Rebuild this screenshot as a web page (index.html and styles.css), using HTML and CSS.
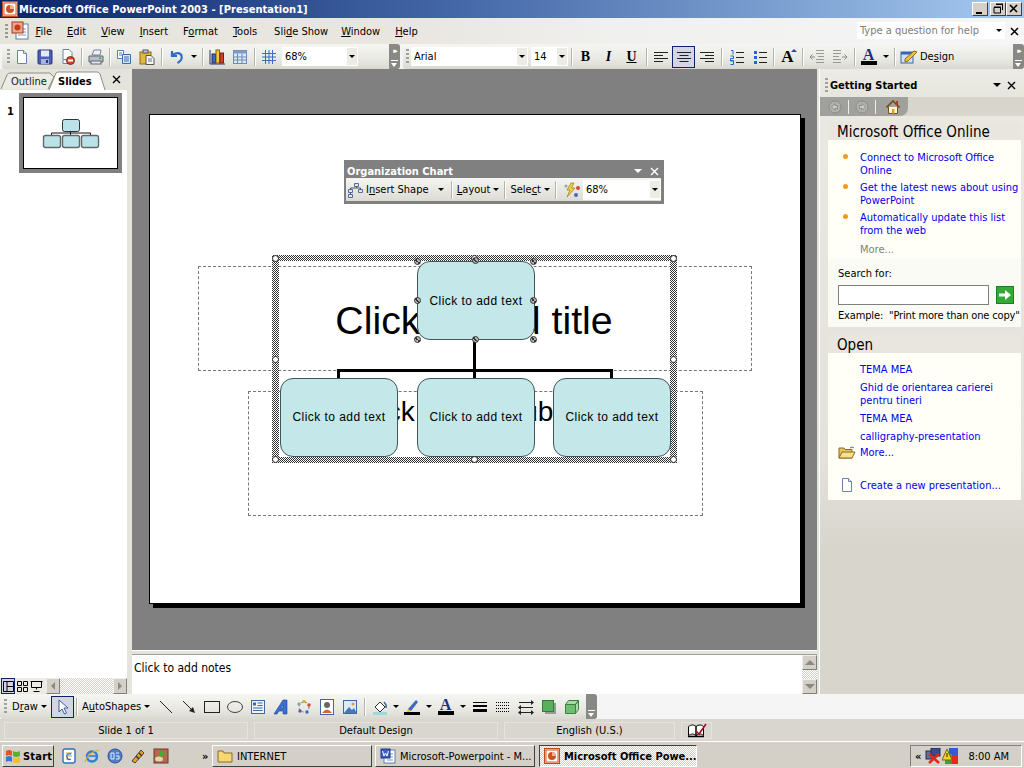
FILE: index.html
```html
<!DOCTYPE html>
<html lang="en">
<head>
<meta charset="utf-8">
<title>Microsoft Office PowerPoint 2003</title>
<link rel="stylesheet" href="styles.css">
</head>
<body>
<div class="app">
  <header class="titlebar">
    <svg class="appicon" viewBox="0 0 16 16"><rect x=".5" y=".5" width="15" height="15" fill="#f6d9c4" stroke="#c34a1b"/><rect x="2" y="2" width="12" height="12" fill="#fff" stroke="#d0582a"/><circle cx="8" cy="8" r="4" fill="#c8541f"/><path d="M8 8V4a4 4 0 0 1 4 4z" fill="#f5b48a"/></svg>
    <span class="titletext">Microsoft Office PowerPoint 2003 - [Presentation1]</span>
    <div class="winbtns">
      <button class="winbtn"><svg viewBox="0 0 14 12"><rect x="3" y="9" width="6" height="2" fill="#000"/></svg></button>
      <button class="winbtn gapb"><svg viewBox="0 0 14 12"><path d="M5 1.500h6.500v5.500M3 4.500h6.500v5.500H3z" fill="none" stroke="#000"/><path d="M5 1h7M3 4h7" stroke="#000"/></svg></button>
      <button class="winbtn"><svg viewBox="0 0 14 12"><path d="M3 2l7 7M10 2l-7 7" stroke="#000" stroke-width="1.600"/></svg></button>
    </div>
  </header>

  <nav class="menubar">
    <svg class="docicon" viewBox="0 0 22 20"><rect x="6" y="3" width="12" height="15" fill="#fff" stroke="#5f7fa8"/><path d="M8 8h8M8 11h8M8 14h8" stroke="#7d93b5"/><rect x="2" y="1" width="11" height="11" fill="#e8a88c" stroke="#a33d1a"/><circle cx="7.500" cy="6.500" r="3" fill="#c23b1b"/></svg>
    <span class="menuitem m1"><u>F</u>ile</span>
    <span class="menuitem"><u>E</u>dit</span>
    <span class="menuitem"><u>V</u>iew</span>
    <span class="menuitem"><u>I</u>nsert</span>
    <span class="menuitem">F<u>o</u>rmat</span>
    <span class="menuitem"><u>T</u>ools</span>
    <span class="menuitem m-slide">Sli<u>d</u>e Show</span>
    <span class="menuitem"><u>W</u>indow</span>
    <span class="menuitem"><u>H</u>elp</span>
    <div class="helpbox">
      <span class="helpfield"><span class="helpinput">Type a question for help</span><span class="arrow helparrow"></span></span>
      <svg class="closex" viewBox="0 0 9 9"><path d="M1 1l7 7M8 1l-7 7" stroke="#000" stroke-width="1.500"/></svg>
    </div>
  </nav>

  <div class="toolrow">
    <div class="tbar tbar1">
      <span class="grip"></span>
      <span class="tb"><svg viewBox="0 0 16 16"><path d="M3.500 1.500h6l3 3v10h-9z" fill="#fff" stroke="#6a84a6"/><path d="M9.500 1.500v3h3" fill="#dfe8f2" stroke="#6a84a6"/></svg></span>
      <span class="tb"><svg viewBox="0 0 16 16"><rect x="1" y="1" width="14" height="14" rx="1" fill="#4b5fb6" stroke="#2a3580"/><rect x="4" y="1.500" width="8" height="6" fill="#e6ebf7"/><rect x="4" y="10" width="8" height="5" fill="#a6b2de"/><rect x="9" y="11" width="2" height="3" fill="#2a3580"/></svg></span>
      <span class="tb"><svg viewBox="0 0 16 16"><path d="M3 .5h6l3 3v7h-9z" fill="#fff" stroke="#6a84a6"/><path d="M3 10.500v4h5" fill="#fff" stroke="#6a84a6"/><circle cx="10.500" cy="11.500" r="4" fill="#d8402a" stroke="#8c2417"/><rect x="8" y="10.500" width="5" height="2" fill="#fff"/></svg></span>
      <span class="sep"></span>
      <span class="tb"><svg viewBox="0 0 16 16"><path d="M4 6L6 1h7l-1 5z" fill="#eef1f6" stroke="#7b8391"/><path d="M1 7h14v6H1z" fill="#b9bfc9" stroke="#5f6672"/><rect x="3" y="12" width="10" height="3" fill="#e5e8ed" stroke="#5f6672"/><rect x="11" y="8.500" width="2" height="1.500" fill="#2ab52a"/></svg></span>
      <span class="sep"></span>
      <span class="tb"><svg viewBox="0 0 16 16"><path d="M1.500 1.500h6v8h-6z" fill="#fff" stroke="#5a7db0"/><path d="M6.500 5.500h8v9h-8z" fill="#dde8f6" stroke="#3e68a8"/><path d="M8 8h5M8 10h5M8 12h5" stroke="#3e68a8"/><path d="M3 4h3M3 6h3" stroke="#5a7db0"/></svg></span>
      <span class="tb"><svg viewBox="0 0 16 16"><rect x="1" y="3" width="11" height="12" fill="#e4b743" stroke="#8f6b10"/><rect x="4" y="1" width="5" height="3" fill="#c8c8c8" stroke="#555"/><path d="M7 6.500h5l3 3v6H7z" fill="#f5f5f5" stroke="#555"/><path d="M9 10h4M9 12h4" stroke="#777"/></svg></span>
      <span class="sep s7"></span>
      <span class="tb"><svg viewBox="0 0 16 16"><path d="M3 2v5h5M3.500 6.500C6 3.500 11 3 12.500 6.500c1 3-1 6-4 7.500" fill="none" stroke="#2f6bc4" stroke-width="2.200"/></svg></span>
      <span class="tba"><span class="arrow"></span></span>
      <span class="sep s6"></span>
      <span class="tb"><svg viewBox="0 0 16 16"><path d="M1 1v14h15" fill="none" stroke="#2b2b70"/><rect x="3" y="5" width="3.500" height="9" fill="#3c67c8" stroke="#1c2f70"/><rect x="7" y="1" width="3.500" height="13" fill="#f1cc2e" stroke="#7c6510"/><rect x="11" y="4" width="3.500" height="10" fill="#d83d2b" stroke="#7c1e12"/></svg></span>
      <span class="tb"><svg viewBox="0 0 16 16"><rect x="1.500" y="1.500" width="13" height="13" fill="#dfe8f7" stroke="#6b8bb8"/><rect x="1.500" y="1.500" width="13" height="3" fill="#7e9cc8"/><path d="M5.500 4.500v10M10 4.500v10M1.500 8h13M1.500 11h13" stroke="#6b8bb8"/></svg></span>
      <span class="sep s6"></span>
      <span class="tb"><svg viewBox="0 0 16 16"><path d="M4.500 1v14M8 1v14M11.500 1v14M1 4.500h14M1 8h14M1 11.500h14" stroke="#3d6bc8"/></svg></span>
      <span class="combo zoomcombo"><span class="comboval">68%</span><span class="comboarrow"><span class="arrow"></span></span></span>
      <span class="overflow"><span class="chev">▸▸</span><span class="ofl"></span></span>
    </div>
    <div class="tbar tbar2">
      <span class="grip"></span>
      <span class="combo fontcombo"><span class="comboval">Arial</span><span class="comboarrow"><span class="arrow"></span></span></span>
      <span class="combo sizecombo"><span class="comboval">14</span><span class="comboarrow"><span class="arrow"></span></span></span>
      <span class="sep s6"></span>
      <span class="tb fmt fb">B</span>
      <span class="tb fmt fi">I</span>
      <span class="tb fmt fu">U</span>
      <span class="sep s6"></span>
      <span class="tb"><svg viewBox="0 0 16 16"><path d="M1 3.500h14M1 6.500h9M1 9.500h14M1 12.500h9" stroke="#222"/></svg></span>
      <span class="tb active"><svg viewBox="0 0 16 16"><path d="M1 3.500h14M3.500 6.500h9M1 9.500h14M3.500 12.500h9" stroke="#222"/></svg></span>
      <span class="tb"><svg viewBox="0 0 16 16"><path d="M1 3.500h14M6 6.500h9M1 9.500h14M6 12.500h9" stroke="#222"/></svg></span>
      <span class="sep s7"></span>
      <span class="tb"><svg viewBox="0 0 16 16"><path d="M7 3.500h8M7 8.500h8M7 13.500h8" stroke="#222"/><path d="M2 1.500h2v4M1.500 7h3v2.500h-3V12h3M1.500 11.500h3v4h-3" fill="none" stroke="#2d5fd0"/></svg></span>
      <span class="tb"><svg viewBox="0 0 16 16"><path d="M7 3.500h8M7 8.500h8M7 13.500h8" stroke="#222"/><path d="M2 2h3v3H2zM2 7h3v3H2zM2 12h3v3H2z" fill="#2d5fd0"/></svg></span>
      <span class="sep"></span>
      <span class="tb fontup">A<i class="upc"></i></span>
      <span class="sep s6"></span>
      <span class="tb"><svg viewBox="0 0 16 16"><path d="M7 1.500h8M7 4.500h8M9 7.500h6M7 10.500h8M7 13.500h8" stroke="#9a9a94"/><path d="M6 8H1M3.500 5.500L1 8l2.500 2.500" fill="none" stroke="#8a8a84"/></svg></span>
      <span class="tb"><svg viewBox="0 0 16 16"><path d="M1 1.500h8M1 4.500h8M1 7.500h6M1 10.500h8M1 13.500h8" stroke="#9a9a94"/><path d="M10 8h5M12.500 5.500L15 8l-2.500 2.500" fill="none" stroke="#8a8a84"/></svg></span>
      <span class="sep s6"></span>
      <span class="tb fcolor">A<i class="cbar"></i></span>
      <span class="tba"><span class="arrow"></span></span>
      <span class="sep s6"></span>
      <span class="designbtn"><svg class="dsic" viewBox="0 0 18 16"><rect x="1" y="3" width="12" height="11" fill="#cfdff5" stroke="#3a64b0"/><rect x="1" y="3" width="12" height="2.500" fill="#3a64b0"/><path d="M5 10l9-8 3 1-9 9-3 1z" fill="#f0c23c" stroke="#8b6a10"/></svg>De<u>s</u>ign</span>
      <span class="overflow endov"><span class="chev">▸▸</span><span class="ofl"></span></span>
    </div>
  </div>

  <main class="workspace">
    <aside class="leftpane">
      <div class="tabs">
        <svg class="tabshape" viewBox="0 0 127 21"><path d="M1 20L7 6Q8 4 10 4H50L54 8L48 20" fill="#ecebe4" stroke="#8d8d85"/><path d="M49 21L56 4Q57 3 59 3H97Q99 3 100 5L105 21z" fill="#fff"/><path d="M49 21L56 4Q57 3 59 3H97Q99 3 100 5L105 21" fill="none" stroke="#8d8d85"/></svg>
        <span class="tab outline">Outline</span>
        <span class="tab slides">Slides</span>
        <svg class="tabclose" viewBox="0 0 9 9"><path d="M1 1l7 7M8 1l-7 7" stroke="#000" stroke-width="1.400"/></svg>
      </div>
      <div class="thumbs">
        <span class="thumbnum">1</span>
        <div class="thumb">
          <svg class="thumbchart" viewBox="0 0 95 72"><path d="M47.500 34v4M28.500 38v-2h39v2" fill="none" stroke="#111"/><rect x="39.500" y="22.500" width="17" height="12" rx="2" fill="#b9e3e8" stroke="#333"/><rect x="20.500" y="38.500" width="17" height="12" rx="2" fill="#b9e3e8" stroke="#666" stroke-width="1.400"/><rect x="39.500" y="38.500" width="17" height="12" rx="2" fill="#b9e3e8" stroke="#666" stroke-width="1.400"/><rect x="58.500" y="38.500" width="17" height="12" rx="2" fill="#b9e3e8" stroke="#666" stroke-width="1.400"/></svg>
        </div>
      </div>
      <div class="viewbar">
        <span class="vbtn vactive"><svg viewBox="0 0 13 13"><path d="M1.500 1.500h10v10h-10zM5 1.500v10M5 6.500h6.500" fill="none" stroke="#000"/></svg></span>
        <span class="vbtn"><svg viewBox="0 0 13 13"><path d="M1.500 1.500h4v4h-4zM7.500 1.500h4v4h-4zM1.500 7.500h4v4h-4zM7.500 7.500h4v4h-4z" fill="none" stroke="#000"/></svg></span>
        <span class="vbtn"><svg viewBox="0 0 13 13"><path d="M1.500 1.500h10v6h-10zM6.500 7.500v2M3.500 11.500h6M0.500 1.500h12" fill="none" stroke="#000"/></svg></span>
        <span class="hscroll">
          <span class="sbtn"><i class="ar-l"></i></span>
          <span class="sbtrack"></span>
          <span class="sbtn"><i class="ar-r"></i></span>
        </span>
      </div>
    </aside>

    <section class="centerpane">
      <div class="stage">
        <div class="slide">
          <div class="ph ph-title"><span>Click to add title</span></div>
          <div class="ph ph-sub"><span>Click to add subtitle</span></div>
          <div class="chartframe">
            <i class="edge e-t"></i><i class="edge e-b"></i><i class="edge e-l"></i><i class="edge e-r"></i>
            <i class="hd hd-tl"></i><i class="hd hd-tc"></i><i class="hd hd-tr"></i>
            <i class="hd hd-ml"></i><i class="hd hd-mr"></i>
            <i class="hd hd-bl"></i><i class="hd hd-bc"></i><i class="hd hd-br"></i>
          </div>
          <i class="conn conn-v1"></i><i class="conn conn-h"></i><i class="conn conn-d1"></i><i class="conn conn-d2"></i><i class="conn conn-d3"></i>
          <div class="node n-top">Click to add text</div>
          <div class="node n-a">Click to add text</div>
          <div class="node n-b">Click to add text</div>
          <div class="node n-c">Click to add text</div>
          <i class="sh sh1"></i><i class="sh sh2"></i><i class="sh sh3"></i><i class="sh sh4"></i><i class="sh sh5"></i><i class="sh sh6"></i><i class="sh sh7"></i><i class="sh sh8"></i>
        </div>
        <div class="orgbar">
          <div class="orgtitle"><span>Organization Chart</span><span class="tri"></span><svg class="orgx" viewBox="0 0 9 9"><path d="M1 1l7 7M8 1l-7 7" stroke="#fff" stroke-width="1.400"/></svg></div>
          <div class="orgbody">
            <span class="orgitem oi1"><svg class="orgic" viewBox="0 0 16 16"><path d="M7.500 1.500h4v3h-4zM1.500 7.500h4v3h-4zM11.500 7.500h4v3h-4zM1.500 12.500h4v3h-4z" fill="#dfe8f5" stroke="#4f6f9f"/><path d="M9.500 4.500v1.500h-6v1.500M9.500 6h4v1.500M3.500 10.500v2" fill="none" stroke="#555"/></svg>I<u>n</u>sert Shape<span class="arrow a1"></span></span>
            <span class="sep osep"></span>
            <span class="orgitem"><u>L</u>ayout<span class="arrow a2"></span></span>
            <span class="sep osep"></span>
            <span class="orgitem">Sele<u>c</u>t<span class="arrow a2"></span></span>
            <span class="sep osep"></span>
            <svg class="orgic2" viewBox="0 0 18 16"><path d="M8 1L4 8h3L4 15l8-9H8.500L11 1z" fill="#f0cf40" stroke="#9a7a20" stroke-width=".7"/><circle cx="15" cy="6" r="2" fill="#cf4a38"/><circle cx="13" cy="13" r="2" fill="#3d6bc8"/><circle cx="3" cy="4" r="1.500" fill="#8aa"/></svg>
            <span class="combo orgcombo"><span class="comboval">68%</span><span class="comboarrow"><span class="arrow"></span></span></span>
          </div>
        </div>
      </div>
      <div class="splitter"></div>
      <div class="notes">
        <span class="notestext">Click to add notes</span>
        <span class="vscroll">
          <span class="sbtn vs"><i class="ar-u"></i></span>
          <span class="sbtrack"></span>
          <span class="sbtn vs"><i class="ar-d"></i></span>
        </span>
      </div>
    </section>

    <aside class="taskpane">
      <div class="tphead">
        <span class="grip tpgrip"></span>
        <span class="tptitle">Getting Started</span>
        <span class="tri dark"></span>
        <svg class="tpclose" viewBox="0 0 9 9"><path d="M1 1l7 7M8 1l-7 7" stroke="#000" stroke-width="1.400"/></svg>
      </div>
      <div class="tpnav">
        <svg class="navic" viewBox="0 0 14 14"><circle cx="7" cy="7" r="6" fill="#b0b0ac" stroke="#8b8b87"/><path d="M9.500 5.500H7V3.500L3.500 7 7 10.500V8.500h2.500z" fill="#c8c8c4" stroke="#858581" stroke-width=".8"/></svg>
        <i class="navsep"></i>
        <svg class="navic" viewBox="0 0 14 14"><circle cx="7" cy="7" r="6" fill="#b0b0ac" stroke="#8b8b87"/><path d="M4.500 5.500H7V3.500L10.500 7 7 10.500V8.500H4.500z" fill="#c8c8c4" stroke="#858581" stroke-width=".8"/></svg>
        <i class="navsep"></i>
        <svg class="navic home" viewBox="0 0 14 14"><path d="M2.500 7v6.500h9V7" fill="#fff7d8" stroke="#6b5520"/><path d="M.5 7.500L7 1l6.500 6.500" fill="none" stroke="#7a4a1c" stroke-width="1.600"/><rect x="10" y="1" width="2" height="3.500" fill="#b8352a"/><rect x="6" y="9" width="2.500" height="4.500" fill="#e6a020"/></svg>
      </div>
      <div class="tpbody">
        <section class="tpsec">
          <h2 class="sechead">Microsoft Office Online</h2>
          <ul class="links">
            <li>Connect to Microsoft Office Online</li>
            <li>Get the latest news about using PowerPoint</li>
            <li>Automatically update this list from the web</li>
          </ul>
          <p class="moregray">More...</p>
          <div class="searchbox">
            <label class="slabel">Search for:</label>
            <div class="srow"><span class="sinput"></span><svg class="gobtn" viewBox="0 0 18 18"><rect x=".5" y=".5" width="17" height="17" fill="#35a835" stroke="#1f7f1f"/><path d="M3 7.500h6V4l6 5-6 5v-3.500H3z" fill="#fff"/></svg></div>
            <p class="sexample">Example: &nbsp;"Print more than one copy"</p>
          </div>
        </section>
        <section class="tpsec sec2">
          <h2 class="sechead">Open</h2>
          <div class="openlist">
            <p class="ol">TEMA MEA</p>
            <p class="ol">Ghid de orientarea carierei pentru tineri</p>
            <p class="ol">TEMA MEA</p>
            <p class="ol tight">calligraphy-presentation</p>
            <p class="ol ic-row"><svg class="rowic" viewBox="0 0 18 14"><path d="M1 13V3h5l1 1.500h7V13z" fill="#e7c468" stroke="#8a6a20"/><path d="M1 13l3-6h13l-3 6z" fill="#f6e08f" stroke="#8a6a20"/><path d="M12 3q2-2 4 0" fill="none" stroke="#4f6fa8"/></svg>More...</p>
            <p class="ol ic-row create"><svg class="rowic doc" viewBox="0 0 14 16"><path d="M2.500 1.500h6l3 3v10h-9z" fill="#fff" stroke="#6a84a6"/><path d="M8.500 1.500v3h3" fill="#dfe8f2" stroke="#6a84a6"/></svg>Create a new presentation...</p>
          </div>
        </section>
      </div>
    </aside>
  </main>

  <div class="drawbar">
    <div class="tbar tbar3">
      <span class="grip"></span>
      <span class="drawmenu dm1">D<u>r</u>aw<span class="arrow"></span></span>
      <span class="tb active ptr"><svg viewBox="0 0 16 16"><path d="M4 1v12l3-3 2.500 5 2-1L9 9h4z" fill="#fff" stroke="#3a5a9a"/></svg></span>
      <span class="sep"></span>
      <span class="drawmenu auto">A<u>u</u>toShapes<span class="arrow"></span></span>
      <span class="tb"><svg viewBox="0 0 16 16"><path d="M2 2l12 12" stroke="#222"/></svg></span>
      <span class="tb"><svg viewBox="0 0 16 16"><path d="M2 2l10 10" stroke="#222"/><path d="M14 14L8 12l4-4z" fill="#222"/></svg></span>
      <span class="tb"><svg viewBox="0 0 16 16"><rect x=".5" y="2.500" width="15" height="11" fill="none" stroke="#222"/></svg></span>
      <span class="tb"><svg viewBox="0 0 16 16"><ellipse cx="8" cy="8" rx="7.500" ry="5.500" fill="none" stroke="#444"/></svg></span>
      <span class="tb"><svg viewBox="0 0 16 16"><rect x="1.500" y="1.500" width="13" height="13" fill="#eef3fa" stroke="#3f68a8"/><path d="M3 3.500h3v3H3z" fill="#3f68a8"/><path d="M7.500 4h5M7.500 6.500h5M3 9h9.500M3 11.500h9.500" stroke="#3f68a8"/></svg></span>
      <span class="tb"><svg viewBox="0 0 16 16"><path d="M1 15L10 1h4v14h-4v-3H6l-2 3zM8 9h2V6z" fill="#3a6fd0" stroke="#1b3f90" stroke-width=".6"/></svg></span>
      <span class="tb"><svg viewBox="0 0 16 16"><circle cx="8" cy="8" r="5" fill="none" stroke="#777" stroke-dasharray="2 2"/><circle cx="8" cy="2.500" r="1.700" fill="#e0b030"/><circle cx="13" cy="6" r="1.700" fill="#d24a38"/><circle cx="11" cy="13" r="1.700" fill="#3d6bc8"/><circle cx="4" cy="12" r="1.700" fill="#6a4fb0"/><circle cx="3" cy="5" r="1.700" fill="#8aa"/></svg></span>
      <span class="tb"><svg viewBox="0 0 16 16"><rect x="1.500" y=".5" width="13" height="15" fill="#fff" stroke="#3f68a8"/><circle cx="8" cy="6" r="3" fill="#666"/><path d="M3 14q5-7 10 0z" fill="#d8642a"/></svg></span>
      <span class="tb"><svg viewBox="0 0 16 16"><rect x="1.500" y="1.500" width="13" height="13" fill="#dfe9f6" stroke="#3f68a8"/><path d="M2 14l5-6 3 3 2-2 2.500 5z" fill="#4a74b8"/><circle cx="11" cy="5" r="1.500" fill="#e0a030"/></svg></span>
      <span class="sep s7"></span>
      <span class="tb"><svg viewBox="0 0 16 16"><path d="M3 8l5-5 5 5-5 5z" fill="#fff" stroke="#333"/><path d="M12 3q3 3 2 6" stroke="#3f68a8" fill="none" stroke-width="1.500"/><rect x="1" y="13" width="14" height="3" fill="#9fd8d8"/></svg></span>
      <span class="tba t9"><span class="arrow"></span></span>
      <span class="tb"><svg viewBox="0 0 16 16"><path d="M4 10L12 1l2 2-7 9z" fill="#3f68c0"/><path d="M4 10l3 2-4 1z" fill="#e0b030"/><rect y="13" width="16" height="3" fill="#000"/></svg></span>
      <span class="tba"><span class="arrow"></span></span>
      <span class="tb fcolor">A<i class="cbar"></i></span>
      <span class="tba"><span class="arrow"></span></span>
      <span class="tb"><svg viewBox="0 0 16 16"><path d="M1 3.500h14" stroke="#000"/><rect x="1" y="6" width="14" height="2" fill="#000"/><rect x="1" y="10" width="14" height="3" fill="#000"/></svg></span>
      <span class="tb"><svg viewBox="0 0 16 16"><path d="M1 3.500h14M1 6.500h14M1 9.500h14M1 12.500h14" stroke="#000" stroke-dasharray="1 1"/></svg></span>
      <span class="tb"><svg viewBox="0 0 16 16"><path d="M1 3.500h14M1 8.500h14M1 13.500h14" stroke="#222"/><path d="M13 1l3 2.500-3 2.500zM3 6L0 8.500 3 11zM3 11l-3 2.500L3 16zM13 11l3 2.500-3 2.500z" fill="#222"/></svg></span>
      <span class="tb"><svg viewBox="0 0 16 16"><rect x="4" y="4" width="11" height="11" fill="#999"/><rect x="1.500" y="1.500" width="11" height="11" fill="#58b05c" stroke="#2f7d33"/></svg></span>
      <span class="tb"><svg viewBox="0 0 16 16"><path d="M1.500 5.500h10v9h-10z" fill="#6fbf70" stroke="#3f7d43"/><path d="M1.500 5.500l3-4h10l-3 4zM11.500 5.500l3-4v9l-3 4z" fill="#a8dba8" stroke="#3f7d43"/></svg></span>
      <span class="overflow short"><span class="ofl"></span></span>
    </div>
  </div>

  <footer class="statusbar">
    <span class="cell c1">Slide 1 of 1</span>
    <span class="cell c2">Default Design</span>
    <span class="cell c3">English (U.S.)</span>
    <span class="cell c4"><svg class="speller" viewBox="0 0 20 15"><path d="M1.500 3.500c3-2 5-2 7.500 0v9c-2.500-2-4.500-2-7.500 0zM9 3.500c3-2 5-2 7.500 0v9c-2.500-2-4.500-2-7.500 0z" fill="#fff" stroke="#000"/><path d="M1 13.500h16" stroke="#000" stroke-width="1.500"/><path d="M9 8l3 3 7-10" fill="none" stroke="#a5121c" stroke-width="1.600"/></svg></span>
  </footer>

  <div class="taskbar">
    <button class="startbtn"><svg class="flag" viewBox="0 0 16 16"><path d="M1 3q3-2 6 0v5q-3-2-6 0z" fill="#e4522a"/><path d="M8 3q3 2 7 0v5q-4 2-7 0z" fill="#5cb030"/><path d="M1 9q3-2 6 0v5q-3-2-6 0z" fill="#3a74d8"/><path d="M8 9q3 2 7 0v5q-4 2-7 0z" fill="#f2c21c"/></svg>Start</button>
    <div class="quick">
      <svg class="qi" viewBox="0 0 16 16"><rect x="2" y="1" width="12" height="14" rx="2" fill="#fff" stroke="#2f6fc0" stroke-width="1.400"/><path d="M5 5h6M5 8h6M5 11h4" stroke="#d89a20"/><path d="M10 6q-5-1-4 3t4 2" fill="none" stroke="#2f6fc0" stroke-width="1.300"/></svg>
      <svg class="qi" viewBox="0 0 16 16"><circle cx="8" cy="8.500" r="5" fill="none" stroke="#2f7fd8" stroke-width="2.500"/><path d="M4 8h9" stroke="#2f7fd8" stroke-width="1.600"/><path d="M1 14q3-10 14-12" fill="none" stroke="#e0a82a" stroke-width="1.200"/></svg>
      <svg class="qi" viewBox="0 0 16 16"><circle cx="8" cy="8" r="7" fill="#4f7fc8" stroke="#2c4f90"/><path d="M4 5h3v6H4zM9 5h3M9 8h3v3H9" fill="none" stroke="#e5ecf7"/></svg>
      <svg class="qi" viewBox="0 0 16 16"><path d="M2 13L11 2l3 3-9 10z" fill="#e8a020" stroke="#444"/><path d="M6 8l3 3M9 5l3 3" stroke="#333" stroke-width="1.400"/></svg>
      <svg class="qi" viewBox="0 0 16 16"><rect x="1" y="1" width="14" height="14" fill="#b9664a" stroke="#6d3a2a"/><path d="M7 2l6 4-6 2z" fill="#2fb52f"/><ellipse cx="6" cy="11" rx="4" ry="2.500" fill="#dcd8b0"/></svg>
      <span class="more">»</span>
    </div>
    <button class="taskbtn tb-i"><svg class="tbi" viewBox="0 0 16 16"><path d="M1 14V3h5l1 2h8v9z" fill="#f7d774" stroke="#8a6a20"/></svg>INTERNET</button>
    <button class="taskbtn tb-w"><svg class="tbi" viewBox="0 0 16 16"><rect x="4" y="2" width="11" height="13" fill="#fff" stroke="#5f7fa8"/><path d="M7 6h6M7 9h6M7 12h6" stroke="#7d93b5"/><rect x="1" y="1" width="9" height="9" fill="#3a5fc0" stroke="#1f3a85"/><path d="M2.500 3l1.500 5 1.500-3 1.500 3 1.500-5" fill="none" stroke="#fff"/></svg>Microsoft-Powerpoint - M...</button>
    <button class="taskbtn tb-p"><svg class="tbi" viewBox="0 0 16 16"><rect x=".5" y=".5" width="15" height="15" fill="#f6d9c4" stroke="#c34a1b"/><rect x="2" y="2" width="12" height="12" fill="#fff" stroke="#d0582a"/><circle cx="8" cy="8" r="4" fill="#c8541f"/><path d="M8 8V4a4 4 0 0 1 4 4z" fill="#f5b48a"/></svg>Microsoft Office Powe...</button>
    <div class="tray">
      <span class="more trayarrow">«</span>
      <svg class="ti" viewBox="0 0 16 16"><rect x="1" y="3" width="9" height="8" fill="#5f6fa8" stroke="#222a55"/><rect x="6" y="0" width="9" height="8" fill="#3a4a90" stroke="#222a55"/><path d="M4 6l10 9M14 6L4 15" stroke="#e02818" stroke-width="2.400"/></svg>
      <svg class="ti" viewBox="0 0 16 16"><rect x="7" y="0" width="9" height="7" fill="#2a5fd0"/><rect x="7" y="7" width="9" height="9" fill="#e02b20"/><rect x="3" y="6" width="7" height="10" fill="#3aa03a"/><path d="M5 1L0 12h10z" fill="#f3d224" stroke="#7a6810"/><path d="M5 5v4" stroke="#222"/></svg>
      <span class="clock">8:00 AM</span>
    </div>
  </div>
</div>
</body>
</html>
```
FILE: styles.css
```css
* { box-sizing: border-box; }
html, body { margin: 0; padding: 0; }
body { width: 1024px; height: 768px; overflow: hidden; font: 11px/13px "DejaVu Sans Condensed", "DejaVu Sans", Tahoma, sans-serif; color: #000; background: #d4d0c8; }
u { text-decoration: underline; }
.app { display: flex; flex-direction: column; width: 1024px; height: 768px; }

/* title */
.titlebar { flex: 0 0 18px; display: flex; align-items: center; background: linear-gradient(90deg, #0a246a 0%, #4568a8 45%, #a6caf0 100%); padding-left: 2px; }
.appicon { width: 16px; height: 16px; flex: none; }
.titletext { color: #fff; font-weight: bold; margin-left: 1px; font-size: 11px; letter-spacing: .05px; }
.winbtns { margin-left: auto; display: flex; margin-right: 2px; }
.winbtn { width: 16px; height: 14px; padding: 0; background: #d4d0c8; border: 1px solid; border-color: #fff #404040 #404040 #fff; display: block; }
.winbtn svg { display: block; width: 14px; height: 12px; }
.gapb { margin-left: 2px; }

/* menu */
.menubar { flex: 0 0 26px; display: flex; align-items: center; background: linear-gradient(90deg, #e5e5dd 0%, #e9e6e0 40%, #f0f0ef 60%, #f6f6f6 100%); padding-left: 5px; position: relative; }
.menubar::before { content: ""; width: 3px; height: 15px; background: repeating-linear-gradient(180deg, #9a9a94 0 2px, transparent 2px 4px); margin-right: 2px; }
.docicon { width: 22px; height: 20px; flex: none; }
.menuitem { padding: 0 7.500px; white-space: nowrap; font-size: 11px; }
.m1 { margin-left: -4px; }
.m-slide { margin: 0 -2px 0 2px; }
.helpbox { margin-left: auto; display: flex; align-items: center; }
.helpfield { width: 148px; height: 17px; background: #fff; display: flex; align-items: center; margin-top: -2px; }
.helpinput { flex: 1; color: #7c7c7c; padding-left: 3px; white-space: nowrap; }
.helparrow { margin-right: 3px; }
.closex { width: 9px; height: 9px; margin: 0 5px 0 5px; }

/* toolbars */
.toolrow { flex: 0 0 25px; display: flex; background: #f4f4f2; }
.drawbar { flex: 0 0 25px; display: flex; background: #f5f5f5; }
.tbar { display: flex; align-items: center; height: 25px; background: linear-gradient(180deg, #f5f5f2 0%, #e9e9e3 60%, #d9d8d0 100%); border-radius: 3px; position: relative; padding-left: 5px; }
.tbar1 { width: 398px; margin-left: 2px; }
.tbar2 { flex: 1; margin-left: 3px; padding-left: 3px; }
.tbar3 { width: 597px; padding-left: 4px; }
.grip { flex: none; width: 3px; height: 16px; background: repeating-linear-gradient(180deg, #a0a09a 0 2px, transparent 2px 4px); }
.tb { flex: none; width: 23px; height: 22px; display: flex; align-items: center; justify-content: center; }
.tb svg { width: 16px; height: 16px; display: block; }
.tba { flex: none; width: 11px; height: 22px; display: flex; align-items: center; justify-content: center; }
.t9 { width: 9px; }
.sep { flex: none; width: 1px; height: 18px; background: #b4b4ac; margin: 0 2px; box-shadow: 1px 0 #fff; }
.s6 { margin: 0 2px 0 3px; }
.s7 { margin: 0 3px; }
.active { background: #d3d6e2; border: 1px solid #0a246a; }
.arrow { display: inline-block; width: 0; height: 0; border: 3px solid transparent; border-top: 3px solid #000; border-bottom: 0; vertical-align: middle; }
.combo { display: flex; flex: none; height: 19px; background: #fff; align-items: center; }
.comboval { flex: 1; padding-left: 3px; }
.comboarrow { flex: none; width: 12px; height: 19px; background: #ecebe4; border: 1px solid #fff; display: flex; align-items: center; justify-content: center; }
.zoomcombo { width: 76px; margin-left: 2px; }
.fontcombo { width: 117px; margin-left: 2px; }
.sizecombo { width: 37px; margin-left: 3px; }
.overflow { position: absolute; right: 0; top: 0; width: 11px; height: 25px; background: #888884; border-radius: 0 3px 3px 0; color: #fff; display: flex; flex-direction: column; align-items: center; justify-content: space-between; padding: 4px 0 3px; }
.chev { font-size: 7px; line-height: 7px; letter-spacing: -2px; }
.ofl { width: 7px; height: 6px; border-top: 1px solid #fff; position: relative; }
.ofl::after { content: ""; position: absolute; left: 0; top: 2px; border: 3.500px solid transparent; border-top: 4px solid #fff; border-bottom: 0; }
.short { justify-content: flex-end; }
.fmt { font-family: "Liberation Serif", serif; font-size: 14px; font-weight: bold; }
.fi { font-style: italic; }
.fu { text-decoration: underline; }
.fontup { font-family: "Liberation Serif", serif; font-size: 17px; font-weight: bold; position: relative; }
.upc { position: absolute; right: 2px; top: 3px; width: 0; height: 0; border: 3px solid transparent; border-bottom: 3px solid #2a4a90; border-top: 0; }
.fcolor { flex-direction: column; font-family: "Liberation Serif", serif; font-weight: bold; font-size: 16px; line-height: 13px; color: #1c2f80; }
.cbar { display: block; width: 16px; height: 4px; background: #000; }
.designbtn { display: flex; align-items: center; margin-left: 3px; }
.dsic { width: 18px; height: 16px; margin-right: 2px; }
.drawmenu { flex: none; display: flex; align-items: center; white-space: nowrap; }
.drawmenu .arrow { margin-left: 3px; }
.dm1 { width: 44px; padding-left: 5px; }
.auto { width: 72px; margin-left: 3px; }

/* workspace */
.workspace { flex: 1 1 0; min-height: 0; display: flex; background: #e4e3dc; }
.leftpane { flex: 0 0 127px; display: flex; flex-direction: column; background: #fff; }
.tabs { flex: 0 0 21px; position: relative; background: #e4e3dc; display: flex; align-items: flex-end; }
.tabshape { position: absolute; left: 0; top: 0; width: 127px; height: 21px; }
.tab { position: relative; padding-bottom: 2px; }
.outline { margin-left: 11px; color: #222; width: 47px; }
.slides { font-weight: bold; }
.tabclose { position: absolute; right: 6px; top: 6px; width: 9px; height: 9px; }
.thumbs { flex: 1; position: relative; padding: 3px 0 0 19px; }
.thumbnum { position: absolute; left: 7px; top: 15px; font-weight: bold; }
.thumb { width: 103px; height: 80px; border: 4px solid #808080; background: #fff; position: relative; }
.thumb::before { content: ""; position: absolute; inset: 0; border: 1px solid #000; }
.thumbchart { position: absolute; left: 0; top: 0; width: 95px; height: 72px; }
.viewbar { flex: 0 0 16px; display: flex; background: #ecebe4; align-items: stretch; padding-left: 1px; }
.vbtn { width: 14px; display: flex; align-items: center; justify-content: center; }
.vbtn svg { width: 13px; height: 13px; }
.vactive { background: #d3d6e2; box-shadow: inset 0 0 0 1px #0a246a; }
.hscroll { flex: 1; display: flex; margin-left: 3px; }
.sbtn { flex: none; width: 14px; background: #d4d0c8; border: 1px solid; border-color: #efefe9 #808080 #808080 #efefe9; display: flex; align-items: center; justify-content: center; }
.sbtrack { flex: 1; background: repeating-conic-gradient(#d4d0c8 0 25%, #fff 0 50%) 0 0 / 2px 2px; }
.ar-l { border: 4px solid transparent; border-right: 4px solid #8a8a84; border-left: 0; }
.ar-r { border: 4px solid transparent; border-left: 4px solid #8a8a84; border-right: 0; }
.ar-u { border: 5px solid transparent; border-bottom: 5px solid #8a8a84; border-top: 0; }
.ar-d { border: 5px solid transparent; border-top: 5px solid #8a8a84; border-bottom: 0; }

/* center */
.centerpane { flex: 0 0 691px; padding-left: 5px; margin-right: 1px; display: flex; flex-direction: column; background: #e4e3dc; }
.stage { flex: 1 1 0; min-height: 0; position: relative; background: #808080; margin-right: 1px; padding: 45px 0 0 17px; }
.slide { position: relative; width: 652px; height: 490px; background: #fff; border: 1px solid #000; box-shadow: 4px 4px 0 #000; }
.ph { position: absolute; border: 1px dashed #777; display: flex; justify-content: center; font-family: "Liberation Sans", Arial, sans-serif; color: #000; }
.ph-title { left: 47px; top: 151px; width: 554px; height: 105px; font-size: 39.300px; line-height: 107px; padding-right: 2px; }
.ph-sub { left: 97px; top: 276px; width: 455px; height: 125px; font-size: 28px; line-height: 40px; }
.ph { margin-left: 1px; }
.chartframe { position: absolute; left: 125px; top: 143px; width: 399px; height: 202px; }
.edge { position: absolute; background: repeating-conic-gradient(#333 0 25%, #fff 0 50%) 0 0 / 2px 2px; }
.e-t { left: -3px; right: -3px; top: -3px; height: 6px; }
.e-b { left: -3px; right: -3px; bottom: -3px; height: 6px; }
.e-l { left: -3px; top: -3px; bottom: -3px; width: 7px; }
.e-r { right: -3px; top: -3px; bottom: -3px; width: 7px; }
.hd { position: absolute; width: 7px; height: 7px; border-radius: 50%; background: #fff; border: 1px solid #222; z-index: 2; }
.hd-tl { left: -3px; top: -3px; }
.hd-tc { left: 196px; top: -3px; }
.hd-tr { right: -3px; top: -3px; }
.hd-ml { left: -3px; top: 98px; }
.hd-mr { right: -3px; top: 98px; }
.hd-bl { left: -3px; bottom: -3px; }
.hd-bc { left: 196px; bottom: -3px; }
.hd-br { right: -3px; bottom: -3px; }
.conn { position: absolute; background: #000; }
.conn-v1 { left: 323px; top: 225px; width: 3px; height: 40px; }
.conn-h { left: 187px; top: 254px; width: 275px; height: 3px; }
.conn-d1 { left: 187px; top: 254px; width: 3px; height: 10px; }
.conn-d2 { left: 323px; top: 254px; width: 3px; height: 10px; }
.conn-d3 { left: 460px; top: 254px; width: 3px; height: 10px; }
.node { position: absolute; width: 118px; height: 79px; border-radius: 13px; background: #c4e7ea; border: 1px solid #3f5558; font: 12px/15px "Liberation Sans", Arial, sans-serif; letter-spacing: .45px; display: flex; align-items: center; justify-content: center; white-space: nowrap; }
.n-top { left: 266px; top: 146px; padding-top: 2px; }
.n-a { left: 129px; top: 263px; }
.n-b { left: 266px; top: 263px; }
.n-c { left: 402px; top: 263px; }
.node { margin-left: 1px; }
.sh { position: absolute; width: 7px; height: 7px; border-radius: 50%; border: 1px solid #333; background: #b8b8b8 linear-gradient(45deg, transparent 40%, #333 40% 60%, transparent 60%); z-index: 3; margin-left: 1px; }
.sh1 { left: 263px; top: 143px; }
.sh2 { left: 321px; top: 142px; }
.sh3 { left: 379px; top: 143px; }
.sh4 { left: 263px; top: 182px; }
.sh5 { left: 379px; top: 182px; }
.sh6 { left: 263px; top: 221px; }
.sh7 { left: 321px; top: 221px; }
.sh8 { left: 379px; top: 221px; }

/* org toolbar */
.orgbar { position: absolute; left: 212px; top: 91px; width: 320px; height: 44px; background: #808080; border: 2px solid #808080; border-width: 3px 3px 3px 2px; display: flex; flex-direction: column; }
.orgtitle { flex: 0 0 15px; display: flex; align-items: center; color: #fff; font-weight: bold; padding: 1px 0 0 1px; }
.tri { margin-left: auto; width: 0; height: 0; border: 4px solid transparent; border-top: 4px solid #fff; border-bottom: 0; }
.orgx { width: 9px; height: 9px; margin: 0 2px 0 8px; }
.orgbody { flex: 1; display: flex; align-items: center; background: linear-gradient(180deg, #f5f5f2, #dcdbd3); padding-left: 1px; }
.orgitem { display: flex; align-items: center; white-space: nowrap; }
.oi1 { width: 101px; }
.orgic { width: 16px; height: 16px; margin-right: 3px; }
.orgic2 { width: 18px; height: 16px; margin-left: 2px; flex: none; }
.a1 { margin-left: 9px; }
.a2 { margin-left: 3px; }
.osep { margin: 0 5px; }
.orgcombo { width: 78px; margin-left: 2px; height: 20px; }

/* notes */
.splitter { flex: 0 0 5px; background: #e4e3dc; border-top: 1px solid #fff; border-bottom: 1px solid #a0a09a; margin-right: 1px; }
.notes { flex: 0 0 39px; background: #fff; display: flex; margin-right: 1px; }
.notestext { flex: 1; padding: 7px 0 0 2px; font-size: 12px; }
.vscroll { flex: 0 0 15px; display: flex; flex-direction: column; }
.vs { width: 15px; height: 15px; }

/* task pane */
.taskpane { flex: 1; min-width: 0; display: flex; flex-direction: column; background: #d8d5cd; border-left: 1px solid #fff; }
.tphead { flex: 0 0 28px; display: flex; align-items: center; background: linear-gradient(180deg, #ecebe5, #e6e5de); padding: 4px 0 0 5px; }
.tpgrip { height: 15px; }
.tptitle { font-weight: bold; margin-left: 2px; }
.tri.dark { border-top-color: #000; }
.tpclose { width: 9px; height: 9px; margin: 0 8px 0 6px; }
.tpnav { flex: 0 0 19px; width: 88px; display: flex; align-items: center; background: #a0a09c; border-radius: 0 0 8px 0; padding-left: 8px; }
.navic { width: 14px; height: 14px; flex: none; }
.home { margin-left: 4px; }
.navsep { width: 1px; height: 14px; background: #eee; margin: 0 6px; }
.tpbody { flex: 1; min-height: 0; background: linear-gradient(180deg, #e9e8e1, #e3e1da 60%, #d8d5cd 75%); padding: 6px 3px 0 8px; }
.tpsec { background: #fffff8; }
.sec2 { margin-top: 8px; }
.sechead { margin: 0; height: 18px; padding: 0 0 0 9px; background: #e8e6df; font-weight: normal; font-size: 15px; line-height: 20px; }
.links { list-style: none; margin: 0; padding: 11px 0 0 32px; color: #0000f0; }
.links li { margin-bottom: 4px; position: relative; }
.links li::before { content: ""; position: absolute; left: -17px; top: 3px; width: 5px; height: 5px; border-radius: 50%; background: #f39a1c; }
.moregray { margin: 0; padding: 2px 0 0 32px; color: #808080; height: 18px; }
.searchbox { background: #fbfbf5; padding: 8px 0 0 10px; height: 68px; }
.slabel { display: block; height: 18px; }
.srow { display: flex; align-items: center; }
.sinput { display: block; width: 151px; height: 20px; background: #fff; border: 1px solid #808080; }
.gobtn { width: 18px; height: 18px; margin-left: 7px; }
.sexample { margin: 4px 0 0; white-space: nowrap; letter-spacing: -.15px; }
.openlist { padding: 10px 0 0 32px; color: #0000f0; height: 147px; }
.ol { margin: 0 0 5px; padding-right: 28px; position: relative; }
.tight { margin-bottom: 3px; }
.ic-row { margin: 0; }
.rowic { position: absolute; left: -22px; top: -1px; width: 18px; height: 14px; }
.doc { width: 14px; height: 16px; left: -20px; top: -2px; }
.create { margin-top: 20px; padding-right: 0; white-space: nowrap; }

/* status */
.statusbar { flex: 0 0 22px; display: flex; align-items: center; gap: 6px; background: #d8d6ce; padding-left: 4px; }
.cell { height: 17px; border: 1px solid #e6e2dc; display: flex; align-items: center; justify-content: center; }
.c1 { width: 244px; }
.c2 { width: 244px; }
.c3 { width: 171px; }
.c4 { width: 31px; }
.speller { width: 20px; height: 15px; }

/* taskbar */
.taskbar { flex: 0 0 27px; display: flex; align-items: center; background: #d4d0c8; border-top: 1px solid #fff; padding: 2px 2px 0; }
.startbtn { width: 52px; height: 22px; padding: 0 0 0 2px; display: flex; align-items: center; font: bold 11px "DejaVu Sans Condensed", sans-serif; letter-spacing: .2px; background: #d4d0c8; border: 1px solid; border-color: #fff #404040 #404040 #fff; }
.flag { width: 16px; height: 16px; margin-right: 2px; }
.quick { width: 158px; display: flex; align-items: center; padding-left: 7px; gap: 7px; }
.qi { width: 16px; height: 16px; flex: none; }
.more { font-weight: bold; margin-left: 26px; }
.taskbtn { height: 22px; padding: 0 0 0 4px; display: flex; align-items: center; background: #d4d0c8; font: 11px "DejaVu Sans Condensed", sans-serif; color: #000; border: 1px solid; border-color: #fff #404040 #404040 #fff; white-space: nowrap; overflow: hidden; }
.tbi { width: 16px; height: 16px; margin-right: 4px; flex: none; }
.tb-i { width: 160px; margin-right: 3px; }
.tb-w { width: 160px; margin-right: 4px; }
.tb-p { width: 158px; font-weight: bold; border-color: #404040 #fff #fff #404040; background: repeating-conic-gradient(#d4d0c8 0 25%, #fff 0 50%) 0 0 / 2px 2px; }
.tray { margin-left: auto; width: 112px; height: 22px; display: flex; align-items: center; border: 1px solid; border-color: #808080 #fff #fff #808080; padding-left: 4px; gap: 1px; }
.trayarrow { margin: 0 3px 0 0; }
.ti { width: 16px; height: 16px; flex: none; }
.clock { margin-left: 9px; }
```
